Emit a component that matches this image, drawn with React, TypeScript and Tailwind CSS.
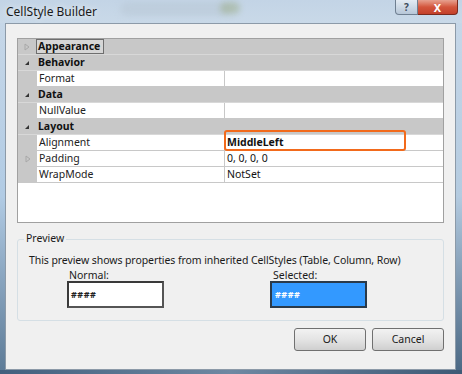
import React from "react";

const font = { fontFamily: '"Segoe UI", "Noto Sans", sans-serif' };

function Expanded() {
  return (
    <svg width="6" height="6" viewBox="0 0 6 6" className="block">
      <path d="M5 1 L5 5 L1 5 Z" fill="#333" />
    </svg>
  );
}

function Collapsed() {
  return (
    <svg width="6" height="8" viewBox="0 0 6 8" className="block">
      <path d="M1 1 L5 4 L1 7 Z" fill="none" stroke="#a8a8a8" strokeWidth="1" />
    </svg>
  );
}

function Category({ label, expanded, focus }: { label: string; expanded: boolean; focus?: boolean }) {
  return (
    <div className="flex h-[16px] items-center bg-[#c8c8c8] border-b border-[#d8d8d8]">
      <div className="flex w-[18px] shrink-0 items-center justify-center">
        {expanded ? <Expanded /> : <Collapsed />}
      </div>
      {focus ? (
        <div className="flex h-[15px] items-center border border-[#6e6e6e] bg-[#d6d6d6] pl-[1px] pr-[3px] font-bold text-[#111]">
          {label}
        </div>
      ) : (
        <div className="pl-[2px] font-bold text-[#111]">{label}</div>
      )}
    </div>
  );
}

function Prop({ name, value, expandable, highlight }: { name: string; value: string; expandable?: boolean; highlight?: boolean }) {
  return (
    <div className="flex h-[16px]">
      <div className="flex w-[19px] shrink-0 items-center justify-center bg-[#c8c8c8]">
        {expandable ? <Collapsed /> : null}
      </div>
      <div className="flex w-[187px] shrink-0 items-center border-b border-[#c8c8c8] bg-white pl-[2px] text-[#222]">
        {name}
      </div>
      <div className="w-px shrink-0 bg-[#c8c8c8]" />
      <div className="relative flex flex-1 items-center border-b border-[#c8c8c8] bg-white pl-[2px] text-[#111]">
        <span className={highlight ? "font-bold" : ""}>{value}</span>
        {highlight ? (
          <div className="absolute left-[-1px] top-[-5px] h-[21px] w-[182px] rounded-[3px] border-2 border-[#f26a1b]" />
        ) : null}
      </div>
    </div>
  );
}

export default function App() {
  return (
    <div
      className="relative flex h-[374px] w-[462px] flex-col overflow-hidden text-[10.5px] leading-none"
      style={font}
    >
      {/* title bar */}
      <div className="relative flex h-[23px] shrink-0 items-center bg-gradient-to-b from-[#c3d4e6] to-[#c9d9e8] pl-[6px]">
        <span className="text-[12px] text-[#1a1a1a]" style={{ textShadow: "0 0 6px rgba(255,255,255,0.9)" }}>
          CellStyle Builder
        </span>
        <div className="absolute left-[120px] top-[2px] h-[14px] w-[110px] rounded-full bg-[#b7c6d3] opacity-50 blur-[3px]" />
        <div className="absolute left-[220px] top-[2px] h-[12px] w-[20px] rounded-full bg-[#8fa06a] opacity-40 blur-[3px]" />
        <div className="absolute right-[4px] top-0 flex">
          <div className="flex h-[15px] w-[23px] items-center justify-center rounded-bl-[4px] border border-t-0 border-[#6f7f91] bg-gradient-to-b from-[#e3ebf3] to-[#b7c7d8] text-[10px] font-bold text-[#3c4a5a]">
            ?
          </div>
          <div className="flex h-[15px] w-[40px] items-center justify-center rounded-br-[4px] border border-l-0 border-t-0 border-[#7a2a1e] bg-gradient-to-b from-[#e6a08f] via-[#d3553c] to-[#c3402a] text-[11px] font-bold text-white">
            X
          </div>
        </div>
      </div>

      <div className="flex flex-1">
        {/* left frame */}
        <div className="w-[5px] shrink-0 bg-gradient-to-b from-[#c6d7e8] via-[#b1cbe4] to-[#5e7c98]" />
        {/* client */}
        <div className="flex flex-1 flex-col border border-[#8c9aa8] bg-[#f0f0f0] px-[11px] pt-[14px]">
          {/* property grid */}
          <div className="flex h-[185px] flex-col border border-[#a0a0a0] bg-white">
            <Category label="Appearance" expanded={false} focus />
            <Category label="Behavior" expanded />
            <Prop name="Format" value="" />
            <Category label="Data" expanded />
            <Prop name="NullValue" value="" />
            <Category label="Layout" expanded />
            <Prop name="Alignment" value="MiddleLeft" highlight />
            <Prop name="Padding" value="0, 0, 0, 0" expandable />
            <Prop name="WrapMode" value="NotSet" />
          </div>

          {/* preview group */}
          <div className="relative mt-[16px] h-[82px] rounded-[3px] border border-[#d5dfe5]">
            <span className="absolute left-[6px] top-[-7px] bg-[#f0f0f0] px-[2px] text-[#1a1a1a]">Preview</span>
            <div className="pl-[11px] pt-[15px] tracking-[-0.08px] text-[#1a1a1a]">
              This preview shows properties from inherited CellStyles (Table, Column, Row)
            </div>
            <div className="mt-[4px] flex pl-[49px]">
              <div className="flex w-[203px] flex-col">
                <span className="pl-[2px] text-[#1a1a1a]">Normal:</span>
                <div className="mt-[1px] flex h-[27px] w-[97px] items-center border-2 border-[#3a3a3a] border-r-[#555] border-b-[#555] bg-white pl-[2px] text-[9px] font-bold tracking-[0.5px] text-[#222]">
                  ####
                </div>
              </div>
              <div className="flex flex-col">
                <span className="pl-[3px] text-[#1a1a1a]">Selected:</span>
                <div className="mt-[1px] flex h-[27px] w-[97px] items-center border-2 border-[#2a3a4a] bg-[#3399ff] pl-[3px] text-[9px] font-bold tracking-[0.5px] text-white">
                  ####
                </div>
              </div>
            </div>
          </div>

          {/* buttons */}
          <div className="mt-[7px] flex justify-end gap-[6px]">
            <button className="flex h-[23px] w-[72px] items-center justify-center rounded-[3px] border border-[#707070] bg-gradient-to-b from-[#f2f2f2] via-[#e4e4e4] to-[#cfcfcf] text-[#1a1a1a]">
              OK
            </button>
            <button className="flex h-[23px] w-[72px] items-center justify-center rounded-[3px] border border-[#707070] bg-gradient-to-b from-[#f2f2f2] via-[#e4e4e4] to-[#cfcfcf] text-[#1a1a1a]">
              Cancel
            </button>
          </div>
        </div>
        {/* right frame */}
        <div className="w-[6px] shrink-0 bg-gradient-to-b from-[#c6d7e8] via-[#b4cbe0] to-[#4d6a86]" />
      </div>
      {/* bottom frame */}
      <div className="h-[4px] shrink-0 bg-gradient-to-r from-[#42607e] via-[#6e88a2] to-[#3e5a76]" />
    </div>
  );
}
